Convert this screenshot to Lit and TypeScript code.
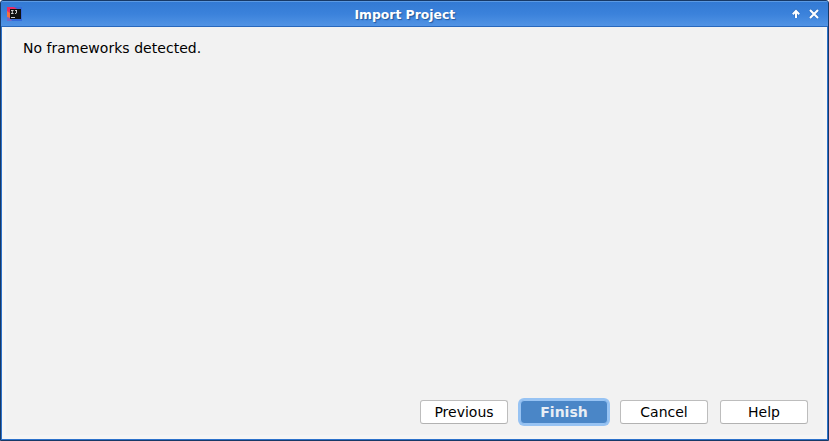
import { LitElement, html, css } from "lit";
import { customElement } from "lit/decorators.js";

@customElement("app-root")
class AppRoot extends LitElement {
  static styles = css`
    :host {
      display: flex;
      flex-direction: column;
      box-sizing: border-box;
      width: 829px;
      height: 441px;
      border: 1px solid #173967;
      border-radius: 3px 3px 0 0;
      background: #2d72cb;
      font-family: "DejaVu Sans", sans-serif;
      color: #000;
      overflow: hidden;
    }
    .title {
      flex: none;
      box-sizing: border-box;
      height: 26px;
      display: flex;
      align-items: center;
      padding: 0 6px;
      border-top: 1px solid #5b9ae4;
      border-bottom: 1px solid #2868bd;
      background: linear-gradient(#337ad4, #3b82db 50%, #5193e4);
    }
    .logo, .controls { flex: 1 0 0; display: flex; align-items: center; }
    .controls { flex-basis: 20px; box-sizing: border-box; justify-content: flex-end; padding-right: 2px; }
    .name {
      color: #fff;
      font-size: 11.5px;
      transform: scaleX(1.075);
      font-weight: bold;
      line-height: 16px;
      padding-top: 1px;
      white-space: nowrap;
      text-shadow: 1px 1px 1px #24589c;
    }
    svg { display: block; }
    .body {
      flex: 1;
      display: flex;
      flex-direction: column;
      justify-content: space-between;
      margin: 0 1px 1px;
      padding: 12px 15px 11px 16px;
      background: #f2f2f2;
      border: solid #f5f5f5;
      border-width: 0 4px 4px;
    }
    .message {
      padding-left: 1px;
      font-size: 14px;
      letter-spacing: 0.04px;
      line-height: 18px;
    }
    .actions { display: flex; justify-content: flex-end; gap: 12px; }
    .btn {
      box-sizing: border-box;
      width: 88px;
      height: 24px;
      padding: 0;
      border: 1px solid #bdbdbd;
      border-bottom-color: #b2b2b2;
      border-radius: 3px;
      background: #fff;
      font: 14px/20px "DejaVu Sans", sans-serif;
      color: #000;
      text-align: center;
    }
    .primary {
      border-color: #97c3f3;
      border-radius: 4px;
      background: #4a86c7;
      color: #e8eef5;
      font-weight: bold;
      box-shadow: 0 0 0 2px #97c3f3;
    }
  `;

  render() {
    return html`
      <div class="title">
        <div class="logo">
          <svg width="16" height="16" viewBox="0 0 16 16">
            <path d="M1 1h14v14H5L1 13z" fill="#356bd9" />
            <path d="M0 1h7l3 2-3 7-7-1z" fill="#e82c68" />
            <path d="M0 5l3 2v6l-3-2z" fill="#f5703f" />
            <path d="M0 11l3 1 2 3H0z" fill="#7866c4" />
            <rect x="3" y="3" width="11" height="10" fill="#101010" />
            <path d="M4 4.5h2.6M5.3 4v4M4 7.5h2.6M8 4.5h2M9.5 4v3q0 .5-1.5 .5M4 11.5h4" fill="none" stroke="#ddd" stroke-width=".9" />
          </svg>
        </div>
        <div class="name">Import Project</div>
        <div class="controls">
          <svg width="30" height="12" viewBox="0 0 30 12" fill="none" stroke="#fff">
            <path d="M6 10V3M2.8 6.2L6 3l3.2 3.2" stroke="#245ba2" stroke-width="3.4" opacity=".4" />
            <path d="M20 2l8 8M28 2l-8 8" stroke="#245ba2" stroke-width="3.6" opacity=".4" />
            <path d="M6 10V3M2.8 6.2L6 3l3.2 3.2" stroke-width="2" />
            <path d="M20 2l8 8M28 2l-8 8" stroke-width="2.1" />
          </svg>
        </div>
      </div>
      <div class="body">
        <div class="message">No frameworks detected.</div>
        <div class="actions">
          <button class="btn">Previous</button>
          <button class="btn primary">Finish</button>
          <button class="btn">Cancel</button>
          <button class="btn">Help</button>
        </div>
      </div>
    `;
  }
}
